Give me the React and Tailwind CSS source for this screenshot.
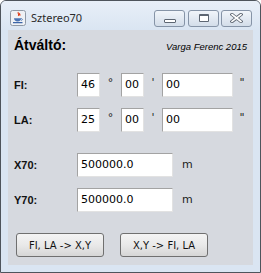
import React from 'react'

const tahoma = "font-['DejaVu_Sans',sans-serif]"
const label = "font-['Liberation_Sans',Arial,sans-serif] font-bold text-[11px] text-[#111]"

function JavaIcon() {
  return (
    <svg width="16" height="16" viewBox="0 0 16 16">
      <rect x="0.5" y="0.5" width="15" height="15" rx="2" fill="#eef1f5" stroke="#8f99a6" />
      <path d="M8.5 2.2c-1.6 1.2 1.4 1.9-0.2 3.6M9.8 3.3c-1 0.9 0.9 1.3-0.1 2.4" stroke="#e0401c" strokeWidth="1.2" fill="none" />
      <path d="M4 8.2h7.2c0 2-1.4 3.2-3.6 3.2S4 10.2 4 8.2z" fill="#4a74b4" />
      <path d="M11.2 8.7c1.6-0.3 1.6 1.6 0 1.8" stroke="#4a74b4" strokeWidth="0.9" fill="none" />
      <path d="M3 12.6h9.5" stroke="#3c66a8" strokeWidth="1.3" />
    </svg>
  )
}

function CapButton({ children, className = '' }) {
  return (
    <div className={`w-[31px] h-[17px] rounded-[3px] border border-[#8694a7] bg-gradient-to-b from-[#f1f5fa] to-[#d3dde9] flex items-center justify-center ${className}`}>
      {children}
    </div>
  )
}

function Field({ w, value }) {
  return (
    <div className={`${w} h-[24px] bg-white border-t border-l border-[#a3a3a3] border-b border-r border-b-[#e2e2e2] border-r-[#e2e2e2] flex items-center pl-[3px] ${tahoma} text-[11px] text-black`}>
      {value}
    </div>
  )
}

function Sym({ w, children }) {
  return <span className={`${w} text-center self-start pt-[4px] ${tahoma} text-[11px] text-[#222] leading-none`}>{children}</span>
}

function AngleRow({ name, deg, className = '' }) {
  return (
    <div className={`flex items-center pl-[6px] ${className}`}>
      <span className={`w-[63px] ${label}`}>{name}</span>
      <Field w="w-[23px]" value={deg} />
      <Sym w="w-[21px]">°</Sym>
      <Field w="w-[23px]" value="00" />
      <Sym w="w-[18px]">'</Sym>
      <Field w="w-[71px]" value="00" />
      <Sym w="w-[18px]">"</Sym>
    </div>
  )
}

function MeterRow({ name, className = '' }) {
  return (
    <div className={`flex items-center pl-[6px] ${className}`}>
      <span className={`w-[63px] ${label}`}>{name}</span>
      <Field w="w-[96px]" value="500000.0" />
      <span className={`ml-[9px] ${tahoma} text-[11px] text-[#222]`}>m</span>
    </div>
  )
}

function PushButton({ children }) {
  return (
    <button className={`w-[88px] h-[24px] rounded-[3px] border border-[#707070] bg-gradient-to-b from-[#f4f4f4] via-[#e9e9e9] to-[#d6d6d6] ${tahoma} text-[10px] text-[#111] flex items-center justify-center`}>
      {children}
    </button>
  )
}

export default function App() {
  return (
    <div className="w-[261px] h-[273px] flex flex-col bg-[#dae5f2] border border-[#4e545c] rounded-t-[6px] overflow-hidden">
      <div className="h-[29px] shrink-0 flex items-center pt-[5px] pl-[9px] pr-[8px] bg-gradient-to-b from-[#e8eff8] to-[#dae5f2]">
        <JavaIcon />
        <span className="ml-[5px] font-['Noto_Sans',sans-serif] text-[11px] text-[#2a2a2a]">Sztereo70</span>
        <div className="ml-auto flex">
          <CapButton>
            <div className="w-[12px] h-[4px] mt-[6px] bg-white border border-[#5d6672] rounded-[1px]" />
          </CapButton>
          <CapButton className="ml-[3px]">
            <div className="w-[10px] h-[8px] bg-white border border-[#5d6672] border-t-2 rounded-[1px]" />
          </CapButton>
          <CapButton className="ml-[2px]">
            <svg width="13" height="10" viewBox="0 0 13 10">
              <path d="M2 1.5l9 7M11 1.5l-9 7" stroke="#5d6672" strokeWidth="3.4" strokeLinecap="square" />
              <path d="M2 1.5l9 7M11 1.5l-9 7" stroke="#ffffff" strokeWidth="1.6" strokeLinecap="square" />
            </svg>
          </CapButton>
        </div>
      </div>

      <div className="mx-[7px] h-[235px] bg-[#d6d9df] flex flex-col">
        <div className="flex items-baseline justify-between pt-[7px] px-[6px] h-[23px]">
          <span className="font-['Liberation_Sans',Arial,sans-serif] font-bold text-[14px] leading-[16px] text-black">Átváltó:</span>
          <span className="font-['Liberation_Sans',Arial,sans-serif] italic text-[9.5px] text-black">Varga Ferenc 2015</span>
        </div>

        <AngleRow name="FI:" deg="46" className="mt-[20px]" />
        <AngleRow name="LA:" deg="25" className="mt-[11px]" />

        <MeterRow name="X70:" className="mt-[21px]" />
        <MeterRow name="Y70:" className="mt-[11px]" />

        <div className="flex gap-[16px] pl-[8px] mt-[21px]">
          <PushButton>FI, LA -&gt; X,Y</PushButton>
          <PushButton>X,Y -&gt; FI, LA</PushButton>
        </div>
      </div>
    </div>
  )
}
